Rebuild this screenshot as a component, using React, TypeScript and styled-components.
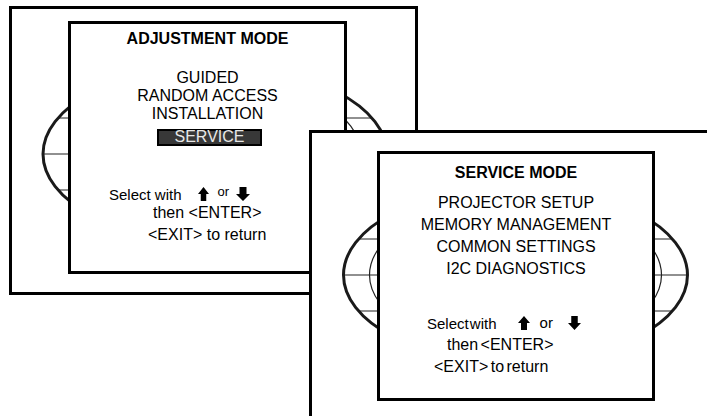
import React from "react";
import styled, { createGlobalStyle } from "styled-components";

const Global = createGlobalStyle`
  html, body { margin: 0; padding: 0; background: #fff; }
  body { font-family: "Liberation Sans", Arial, sans-serif; color: #000; }
`;

const Page = styled.div`
  position: relative;
  width: 707px;
  height: 416px;
  overflow: hidden;
  background: #fff;
`;

const Screen = styled.section<{ $x: number; $y: number; $w: number; $h: number; $padX: number; $padY: number }>`
  position: absolute;
  left: ${(p) => p.$x}px;
  top: ${(p) => p.$y}px;
  width: ${(p) => p.$w}px;
  height: ${(p) => p.$h}px;
  box-sizing: border-box;
  border: 3px solid #000;
  background: #fff;
  padding: ${(p) => p.$padY}px 0 0 ${(p) => p.$padX}px;
  display: flex;
  align-items: flex-start;
`;

const CrtSvg = styled.svg`
  position: absolute;
  left: -3px;
  top: -3px;
  overflow: visible;
  pointer-events: none;
`;

const Menu = styled.div<{ $w: number; $h: number; $padTop: number }>`
  position: relative;
  width: ${(p) => p.$w}px;
  height: ${(p) => p.$h}px;
  box-sizing: border-box;
  border: 3px solid #000;
  background: #fff;
  padding-top: ${(p) => p.$padTop}px;
  display: flex;
  flex-direction: column;
  align-items: center;
`;

const Title = styled.div`
  font-weight: bold;
  font-size: 16px;
  line-height: 18px;
  white-space: nowrap;
`;

const Items = styled.div<{ $gap: number; $lh: number }>`
  margin-top: ${(p) => p.$gap}px;
  display: flex;
  flex-direction: column;
  align-items: center;
  font-size: 16px;
  line-height: ${(p) => p.$lh}px;
  white-space: nowrap;
`;

const Selected = styled.div`
  margin-top: 6px;
  margin-left: 4px;
  width: 105px;
  height: 17px;
  box-sizing: border-box;
  border: 2px solid #000;
  background: #383838;
  color: #e8e8e8;
  font-size: 16px;
  line-height: 11px;
  text-align: center;
`;

const Hints = styled.div<{ $gap: number }>`
  align-self: stretch;
  margin-top: ${(p) => p.$gap}px;
  display: flex;
  flex-direction: column;
  font-size: 16px;
  white-space: nowrap;
`;

const HintLine = styled.div<{ $indent: number; $lh: number; $ws?: number; $size?: number }>`
  padding-left: ${(p) => p.$indent}px;
  line-height: ${(p) => p.$lh}px;
  font-size: ${(p) => p.$size ?? 16}px;
  display: flex;
  align-items: center;
  word-spacing: ${(p) => p.$ws ?? 0}px;
`;

const Or = styled.span<{ $ml: number; $mr: number; $small?: boolean }>`
  font-size: ${(p) => (p.$small ? 13 : 15)}px;
  margin: 0 ${(p) => p.$mr}px 0 ${(p) => p.$ml}px;
  position: relative;
  top: ${(p) => (p.$small ? -3 : -1)}px;
`;

const ArrowSvg = styled.svg<{ $ml?: number }>`
  display: block;
  flex: none;
  margin-left: ${(p) => p.$ml ?? 0}px;
  position: relative;
  top: -1px;
`;

const Arrow = ({ dir, w, h, ml }: { dir: "up" | "down"; w: number; h: number; ml?: number }) => (
  <ArrowSvg $ml={ml} width={w} height={h} viewBox="0 0 12 15" preserveAspectRatio="none">
    {dir === "up" ? (
      <path d="M6 0 L12 7.5 L9 7.5 L9 15 L3 15 L3 7.5 L0 7.5 Z" fill="#000" />
    ) : (
      <path d="M6 15 L12 7.5 L9 7.5 L9 0 L3 0 L3 7.5 L0 7.5 Z" fill="#000" />
    )}
  </ArrowSvg>
);

const Crt = ({ cx, cy, w, h }: { cx: number; cy: number; w: number; h: number }) => {
  const rx = 172;
  const ry = 88;
  const off = 36;
  const dx = rx * Math.sqrt(1 - (off / ry) ** 2);
  return (
    <CrtSvg width={w} height={h}>
      <ellipse cx={cx} cy={cy} rx={146} ry={76} fill="none" stroke="#222" strokeWidth={1.2} />
      <line x1={cx - dx} x2={cx + dx} y1={cy - off} y2={cy - off} stroke="#222" strokeWidth={1.2} />
      <line x1={cx - rx} x2={cx + rx} y1={cy} y2={cy} stroke="#222" strokeWidth={1.2} />
      <line x1={cx - dx} x2={cx + dx} y1={cy + off} y2={cy + off} stroke="#222" strokeWidth={1.2} />
      <ellipse cx={cx} cy={cy} rx={rx} ry={ry} fill="none" stroke="#1a1a1a" strokeWidth={3} />
    </CrtSvg>
  );
};

export default function App() {
  return (
    <Page>
      <Global />
      <Screen $x={9} $y={6} $w={409} $h={289} $padX={56} $padY={12}>
        <Crt cx={206} cy={148} w={409} h={289} />
        <Menu $w={279} $h={253} $padTop={6}>
          <Title>ADJUSTMENT MODE</Title>
          <Items $gap={21} $lh={18}>
            <div>GUIDED</div>
            <div>RANDOM ACCESS</div>
            <div>INSTALLATION</div>
            <Selected>SERVICE</Selected>
          </Items>
          <Hints $gap={40}>
            <HintLine $indent={38} $lh={17} $size={15}>
              Select with
              <Arrow dir="up" w={11} h={14} ml={16} />
              <Or $ml={9} $mr={7} $small>or</Or>
              <Arrow dir="down" w={14} h={14} />
            </HintLine>
            <HintLine $indent={82} $lh={20}>then &lt;ENTER&gt;</HintLine>
            <HintLine $indent={77} $lh={23}>&lt;EXIT&gt; to return</HintLine>
          </Hints>
        </Menu>
      </Screen>
      <Screen $x={309} $y={130} $w={420} $h={300} $padX={65} $padY={18}>
        <Crt cx={206.5} cy={145} w={420} h={300} />
        <Menu $w={278} $h={250} $padTop={10}>
          <Title>SERVICE MODE</Title>
          <Items $gap={10} $lh={22}>
            <div>PROJECTOR SETUP</div>
            <div>MEMORY MANAGEMENT</div>
            <div>COMMON SETTINGS</div>
            <div>I2C DIAGNOSTICS</div>
          </Items>
          <Hints $gap={34}>
            <HintLine $indent={47} $lh={20} $ws={-3} $size={15}>
              Select with
              <Arrow dir="up" w={12} h={14} ml={21} />
              <Or $ml={10} $mr={15}>or</Or>
              <Arrow dir="down" w={13} h={14} />
            </HintLine>
            <HintLine $indent={67} $lh={22} $ws={-2}>then &lt;ENTER&gt;</HintLine>
            <HintLine $indent={54} $lh={22} $ws={-2}>&lt;EXIT&gt; to return</HintLine>
          </Hints>
        </Menu>
      </Screen>
    </Page>
  );
}
